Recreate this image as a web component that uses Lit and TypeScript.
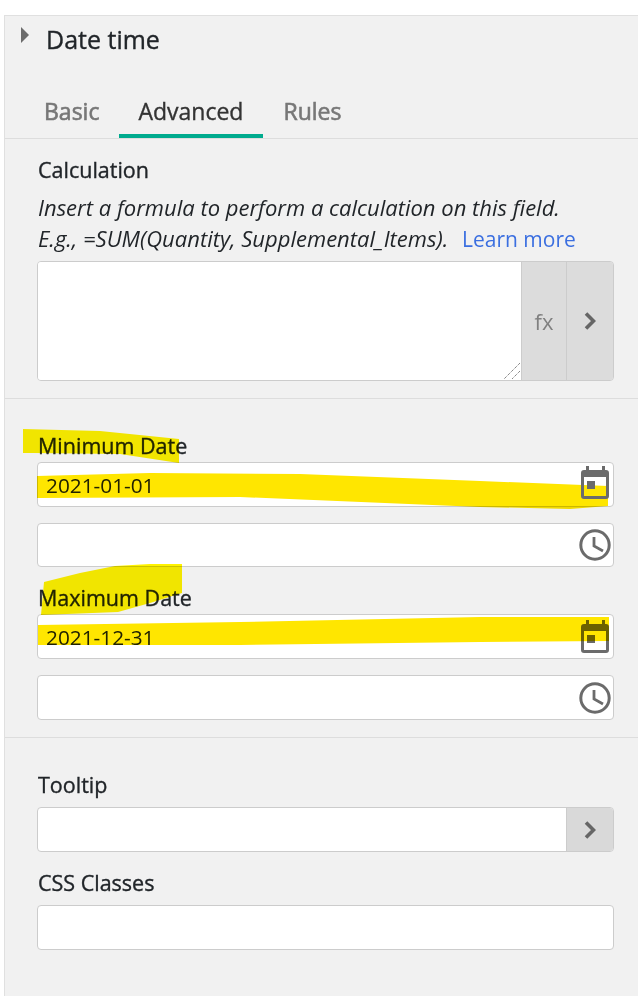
import { LitElement, html, css, svg } from 'lit';
import { customElement, property } from 'lit/decorators.js';

const chevron = html`<svg class="chev" width="12" height="18" viewBox="0 0 12 18"><path d="M2 1.5 9.5 9 2 16.5" fill="none" stroke="#666" stroke-width="3.6"/></svg>`;

const calendar = html`<svg class="cal" width="28" height="33" viewBox="0 0 28 33" fill="#6b6b6b">
  <rect x="5" y="0" width="3" height="6"/><rect x="21" y="0" width="3" height="6"/>
  <path fill-rule="evenodd" d="M3 4h22a3 3 0 0 1 3 3v23a3 3 0 0 1-3 3H3a3 3 0 0 1-3-3V7a3 3 0 0 1 3-3ZM3 11v19h22V11Z"/>
  <rect x="6" y="15" width="8" height="8"/>
</svg>`;

const clock = html`<svg width="32" height="32" viewBox="0 0 32 32" fill="none" stroke="#6b6b6b">
  <circle cx="16" cy="16" r="14.2" stroke-width="3"/>
  <path d="M15 8v9l9 5" stroke-width="2.8"/>
</svg>`;

// marker strokes drawn over the form
const marks = svg`
  <path class="soft" d="M23 429 100 431 179 439V463L120 454 33 453H23Z"/>
  <path d="M37 476 150 473 300 474 480 481 608 486V506L570 509 480 507 240 497 37 498Z"/>
  <path class="soft" d="M44 582 80 573 115 566 150 564H182V593L150 603 118 612 41 615Z"/>
  <path class="over" d="M38 625 240 622 480 617 609 617V641L480 642 240 645 38 645Z"/>
`;

@customElement('form-field')
export class FormField extends LitElement {
  @property({ type: String }) value = '';

  static styles = css`
    :host {
      display: block;
    }
    .box {
      display: flex;
      align-items: stretch;
      height: 100%;
      box-sizing: border-box;
      background: #fff;
      border: 1px solid #ccc;
      border-radius: 4px;
      overflow: hidden;
    }
    input {
      flex: 1;
      min-width: 0;
      border: 0;
      outline: 0;
      padding: 0 8px;
      background: transparent;
      font: 20.8px "Open Sans", sans-serif;
      color: #212529;
    }
    .slot {
      display: flex;
      align-items: center;
      padding-right: 2px;
    }
  `;

  render() {
    return html`<div class="box">
      <input type="text" value=${this.value} />
      <div class="slot"><slot></slot></div>
    </div>`;
  }
}

@customElement('app-root')
export class AppRoot extends LitElement {
  static styles = css`
    :host {
      display: block;
      position: relative;
      height: 996px;
      overflow: hidden;
      background: #fff;
      font-family: "Open Sans", sans-serif;
      color: #212529;
    }
    .panel {
      margin: 15px 0 0 4px;
      height: 981px;
      box-sizing: border-box;
      border-top: 1px solid #e0e0e0;
      border-left: 1px solid #e0e0e0;
      background: #f1f1f1;
    }
    .head {
      display: flex;
      height: 48px;
    }
    .caret {
      margin: 11px 0 0 16px;
      width: 0;
      height: 0;
      border-left: 8px solid #6b6b6b;
      border-top: 8px solid transparent;
      border-bottom: 8px solid transparent;
    }
    h2 {
      margin: 7px 0 0 17px;
      font-size: 25px;
      line-height: 32px;
      font-weight: 400;
      -webkit-text-stroke: 0.35px currentColor;
    }
    .tabs {
      display: flex;
      height: 74px;
      padding: 0 0 0 19px;
      border-bottom: 1px solid #ddd;
    }
    .tab {
      display: flex;
      align-items: center;
      padding: 2px 20px 0;
      height: 52px;
      margin-top: 22px;
      font-size: 23px;
      font-weight: 400;
      color: #777;
      -webkit-text-stroke: 0.6px currentColor;
      box-sizing: border-box;
      border-bottom: 4px solid transparent;
    }
    .tab.on {
      color: #333;
      padding-left: 19px;
      -webkit-text-stroke: 0.35px currentColor;
      border-bottom-color: #00ab8e;
    }
    section {
      padding: 17px 24px 17px 32px;
      border-bottom: 1px solid #ddd;
    }
    section.dates,
    section.last {
      padding-top: 33px;
    }
    section.last {
      border-bottom: 0;
    }
    label {
      display: block;
      margin: 0 0 2px 1px;
      font-size: 21.5px;
      line-height: 28px;
      font-weight: 400;
      -webkit-text-stroke: 0.35px currentColor;
    }
    .tight {
      margin-bottom: 8px;
    }
    .help {
      margin: 8px 0 6px;
      padding-left: 1px;
      font-size: 22px;
      line-height: 31px;
      font-style: italic;
      white-space: nowrap;
    }
    .help a {
      font-size: 21px;
      font-style: normal;
      color: #3b6fe0;
      text-decoration: none;
      margin-left: 8px;
    }
    .calc {
      position: relative;
      display: flex;
      height: 120px;
      border: 1px solid #ccc;
      border-radius: 4px;
      overflow: hidden;
      box-sizing: border-box;
    }
    textarea {
      flex: 1;
      min-width: 0;
      border: 0;
      outline: 0;
      resize: none;
      background: #fff;
      margin: 0;
      padding: 0;
      border-right: 1px solid #ccc;
    }
    .grip {
      position: absolute;
      left: 465px;
      top: 100px;
    }
    .addon {
      display: flex;
      align-items: center;
      justify-content: center;
      background: #dcdcdc;
      color: #808080;
      font-size: 22px;
    }
    .fx {
      width: 44px;
      border-right: 1px solid #ccc;
    }
    .arrow {
      width: 46px;
    }
    form-field {
      height: 45px;
    }
    form-field.short {
      height: 44px;
    }
    .gap {
      margin-top: 16px;
    }
    .next {
      margin-top: 17px;
    }
    .btn {
      display: flex;
      align-items: center;
      justify-content: center;
      width: 46px;
      height: 43px;
      margin: 0 -2px 0 0;
      background: #d9d9d9;
      border-left: 1px solid #ccc;
    }
    svg {
      display: block;
    }
    .cal {
      margin-right: 2px;
    }
    .blank {
      width: 30px;
      height: 33px;
    }
    .marks {
      position: absolute;
      left: 0;
      top: 0;
      z-index: 1;
      mix-blend-mode: multiply;
      pointer-events: none;
    }
    .marks path {
      fill: #ffe600;
    }
    .marks path.soft {
      fill: #fff300;
    }
    .raised {
      position: absolute;
      left: 581px;
      top: 466px;
      z-index: 2;
    }
  `;

  render() {
    return html`
      <div class="panel">
        <div class="head">
          <div class="caret"></div>
          <h2>Date time</h2>
        </div>
        <div class="tabs">
          <div class="tab">Basic</div>
          <div class="tab on">Advanced</div>
          <div class="tab">Rules</div>
        </div>

        <section>
          <label>Calculation</label>
          <div class="help">
            Insert a formula to perform a calculation on this field.<br />
            E.g., =SUM(Quantity, Supplemental_Items). <a href="#">Learn more</a>
          </div>
          <div class="calc">
            <textarea></textarea>
            <svg class="grip" width="18" height="18" viewBox="0 0 18 18" fill="none" stroke="#555" stroke-dasharray="1 1">
              <path d="M17 1 1 17M17 9 9 17"/>
            </svg>
            <div class="addon fx">fx</div>
            <div class="addon arrow">${chevron}</div>
          </div>
        </section>

        <section class="dates">
          <label>Minimum Date</label>
          <form-field value="2021-01-01"><div class="blank"></div></form-field>
          <form-field class="short gap">${clock}</form-field>
          <label class="next">Maximum Date</label>
          <form-field value="2021-12-31">${calendar}</form-field>
          <form-field class="gap">${clock}</form-field>
        </section>

        <section class="last">
          <label class="tight">Tooltip</label>
          <form-field><div class="btn">${chevron}</div></form-field>
          <label class="next tight">CSS Classes</label>
          <form-field></form-field>
        </section>
      </div>

      <svg class="marks" width="638" height="996" viewBox="0 0 638 996">${marks}</svg>
      <div class="raised">${calendar}</div>
    `;
  }
}
